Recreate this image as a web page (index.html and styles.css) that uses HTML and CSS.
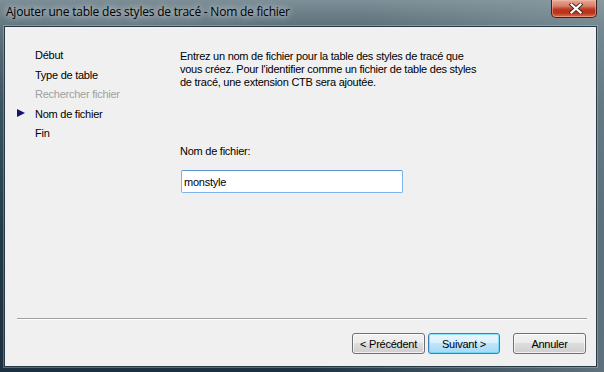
FILE: index.html
```html
<!DOCTYPE html>
<html lang="fr">
<head>
<meta charset="utf-8">
<link rel="stylesheet" href="styles.css">
</head>
<body>
<div class="window">
  <div class="titlebar">
    <div class="title">Ajouter une table des styles de tracé - Nom de fichier</div>
    <div class="close">
      <svg width="14" height="11" viewBox="0 0 14 11">
        <path d="M2.5 1.5 L11.5 9.5 M11.5 1.5 L2.5 9.5" stroke="#4a2a22" stroke-width="4" stroke-linecap="square"/>
        <path d="M2.5 1.5 L11.5 9.5 M11.5 1.5 L2.5 9.5" stroke="#ffffff" stroke-width="2.2" stroke-linecap="square"/>
      </svg>
    </div>
  </div>
  <div class="client">
    <div class="main">
      <ul class="steps">
        <li class="step"><span class="gutter"></span>Début</li>
        <li class="step"><span class="gutter"></span>Type de table</li>
        <li class="step disabled"><span class="gutter"></span>Rechercher fichier</li>
        <li class="step current"><span class="gutter"><span class="arrow"></span></span>Nom de fichier</li>
        <li class="step"><span class="gutter"></span>Fin</li>
      </ul>
      <div class="content">
        <p class="intro">Entrez un nom de fichier pour la table des styles de tracé que vous créez. Pour l'identifier comme un fichier de table des styles de tracé, une extension CTB sera ajoutée.</p>
        <label class="label" for="fname">Nom de fichier:</label>
        <input class="field" id="fname" type="text" value="monstyle">
      </div>
    </div>
    <div class="separator"></div>
    <div class="buttons">
      <button class="btn">&lt; Précédent</button>
      <button class="btn default">Suivant &gt;</button>
      <button class="btn cancel">Annuler</button>
    </div>
  </div>
</div>
</body>
</html>
```
FILE: styles.css
```css
html, body {
  margin: 0;
  padding: 0;
}
body {
  width: 604px;
  height: 372px;
  overflow: hidden;
  font-family: "Liberation Sans", Arial, sans-serif;
}
.window {
  width: 604px;
  height: 372px;
  display: flex;
  flex-direction: column;
  background:
    radial-gradient(ellipse 180px 60px at 120px 12px, rgba(120,138,146,0.55), rgba(120,138,146,0) 100%),
    linear-gradient(100deg, rgba(0,0,0,0) 55%, rgba(150,166,172,0.55) 100%),
    linear-gradient(180deg, #7d8f97 0px, #5d717b 26px, #3b5260 110px, #22394a 240px, #1b3142 372px);
}
.titlebar {
  height: 26px;
  display: flex;
  align-items: flex-start;
  flex: none;
}
.title {
  margin: 3px 0 0 6px;
  font-family: "Open Sans", "Liberation Sans", sans-serif;
  font-size: 12px;
  line-height: 18px;
  color: #000;
  letter-spacing: -0.22px;
  text-shadow: 0 0 6px rgba(230,236,238,0.9), 0 0 10px rgba(230,236,238,0.6);
}
.close {
  margin-left: auto;
  margin-right: 7px;
  width: 44px;
  height: 17px;
  border: 1px solid #3b2420;
  border-top: none;
  border-radius: 0 0 5px 5px;
  background: linear-gradient(180deg, #e6a994 0%, #d5806a 35%, #c0361d 55%, #b8321a 75%, #d9704f 100%);
  box-shadow: inset 0 0 0 1px rgba(255,200,180,0.45);
  display: flex;
  align-items: center;
  justify-content: center;
}
.close svg {
  display: block;
  margin-left: 3px;
}
.client {
  flex: 1;
  margin: 0 7px 5px 4px;
  border: 1px solid #263844;
  box-shadow: 0 0 0 1px rgba(200,210,214,0.35);
  background: #f0f0f0;
  display: flex;
  flex-direction: column;
  font-size: 11px;
  letter-spacing: -0.25px;
  color: #000;
}
.main {
  flex: 1;
  display: flex;
  align-items: flex-start;
}
.steps {
  list-style: none;
  margin: 19px 0 0 0;
  padding: 0 0 0 12px;
  width: 163px;
  flex: none;
}
.step {
  display: flex;
  align-items: center;
  height: 19.5px;
  line-height: 19.5px;
  white-space: nowrap;
}
.step.disabled {
  color: #a0a0a0;
}
.gutter {
  width: 18px;
  flex: none;
  display: flex;
  align-items: center;
}
.arrow {
  width: 0;
  height: 0;
  margin-top: -2px;
  border-left: 8px solid #141470;
  border-top: 4px solid transparent;
  border-bottom: 4px solid transparent;
}
.content {
  width: 302px;
  margin-top: 23px;
  display: flex;
  flex-direction: column;
  align-items: flex-start;
}
.intro {
  margin: 0;
  line-height: 13px;
}
.label {
  margin-top: 56px;
  line-height: 13px;
}
.field {
  margin: 12px 0 0 1px;
  width: 222px;
  height: 23px;
  box-sizing: border-box;
  border: 1px solid #7eb4ea;
  border-top-color: #5c93c8;
  border-radius: 2px;
  background: #fff;
  padding: 0 2px;
  font-family: "Liberation Sans", Arial, sans-serif;
  font-size: 11px;
  letter-spacing: -0.25px;
  color: #000;
  outline: none;
}
.separator {
  margin: 0 9px 0 12px;
  height: 0;
  border-top: 1px solid #a0a0a0;
  border-bottom: 1px solid #ffffff;
}
.buttons {
  display: flex;
  justify-content: flex-end;
  padding: 13px 10px 12px 0;
}
.btn {
  height: 21px;
  width: 73px;
  margin: 0;
  padding: 0;
  box-sizing: border-box;
  border: 1px solid #707070;
  border-radius: 3px;
  background: linear-gradient(180deg, #f2f2f2 0%, #ebebeb 49%, #dddddd 50%, #cfcfcf 100%);
  box-shadow: inset 0 0 0 1px rgba(255,255,255,0.7);
  font-family: "Liberation Sans", Arial, sans-serif;
  font-size: 11px;
  letter-spacing: -0.25px;
  color: #000;
}
.btn.default {
  margin-left: 3px;
  width: 72px;
  border-color: #3c7fb1;
  background: linear-gradient(180deg, #eaf6fd 0%, #d9f0fc 49%, #bee6fd 50%, #a7d9f5 100%);
  box-shadow: inset 0 0 0 1px rgba(72,216,251,0.6);
}
.btn.cancel {
  margin-left: 13px;
}
```
